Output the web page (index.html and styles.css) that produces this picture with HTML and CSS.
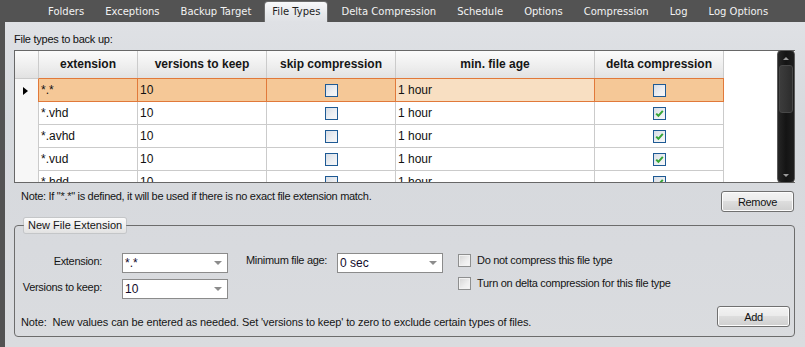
FILE: index.html
```html
<!DOCTYPE html>
<html>
<head>
<meta charset="utf-8">
<link rel="stylesheet" href="styles.css">
</head>
<body>
<div class="app">
  <nav class="tabs">
    <span class="tab">Folders</span>
    <span class="tab">Exceptions</span>
    <span class="tab">Backup Target</span>
    <span class="tab active">File Types</span>
    <span class="tab">Delta Compression</span>
    <span class="tab">Schedule</span>
    <span class="tab">Options</span>
    <span class="tab">Compression</span>
    <span class="tab">Log</span>
    <span class="tab">Log Options</span>
  </nav>
  <main class="panel">
    <div class="caption">File types to back up:</div>
    <div class="grid">
      <div class="grid-body">
        <div class="row head">
          <div class="c rh"></div>
          <div class="c ext">extension</div>
          <div class="c ver">versions to keep</div>
          <div class="c skip">skip compression</div>
          <div class="c age">min. file age</div>
          <div class="c delta">delta compression</div>
          <div class="c fill"></div>
        </div>
        <div class="row sel">
          <div class="c rh"><span class="pointer"></span></div>
          <div class="c ext">*.*</div>
          <div class="c ver">10</div>
          <div class="c skip"><span class="cb"></span></div>
          <div class="c age">1 hour</div>
          <div class="c delta"><span class="cb"></span></div>
          <div class="c fill"></div>
        </div>
        <div class="row">
          <div class="c rh"></div>
          <div class="c ext">*.vhd</div>
          <div class="c ver">10</div>
          <div class="c skip"><span class="cb"></span></div>
          <div class="c age">1 hour</div>
          <div class="c delta"><span class="cb"><svg viewBox="0 0 11 11" width="11" height="11"><path d="M2.2 5.6 L4.4 7.8 L8.8 2.8" fill="none" stroke="#36a536" stroke-width="2"/></svg></span></div>
          <div class="c fill"></div>
        </div>
        <div class="row">
          <div class="c rh"></div>
          <div class="c ext">*.avhd</div>
          <div class="c ver">10</div>
          <div class="c skip"><span class="cb"></span></div>
          <div class="c age">1 hour</div>
          <div class="c delta"><span class="cb"><svg viewBox="0 0 11 11" width="11" height="11"><path d="M2.2 5.6 L4.4 7.8 L8.8 2.8" fill="none" stroke="#36a536" stroke-width="2"/></svg></span></div>
          <div class="c fill"></div>
        </div>
        <div class="row">
          <div class="c rh"></div>
          <div class="c ext">*.vud</div>
          <div class="c ver">10</div>
          <div class="c skip"><span class="cb"></span></div>
          <div class="c age">1 hour</div>
          <div class="c delta"><span class="cb"><svg viewBox="0 0 11 11" width="11" height="11"><path d="M2.2 5.6 L4.4 7.8 L8.8 2.8" fill="none" stroke="#36a536" stroke-width="2"/></svg></span></div>
          <div class="c fill"></div>
        </div>
        <div class="row">
          <div class="c rh"></div>
          <div class="c ext">*.hdd</div>
          <div class="c ver">10</div>
          <div class="c skip"><span class="cb"></span></div>
          <div class="c age">1 hour</div>
          <div class="c delta"><span class="cb"><svg viewBox="0 0 11 11" width="11" height="11"><path d="M2.2 5.6 L4.4 7.8 L8.8 2.8" fill="none" stroke="#36a536" stroke-width="2"/></svg></span></div>
          <div class="c fill"></div>
        </div>
      </div>
      <div class="scrollbar">
        <span class="sb-btn"><span class="tri up"></span></span>
        <span class="thumb"></span>
        <span class="sb-space"></span>
        <span class="sb-btn"><span class="tri down"></span></span>
      </div>
    </div>
    <div class="note-row">
      <div class="note">Note: If "*.*" is defined, it will be used if there is no exact file extension match.</div>
      <button class="btn">Remove</button>
    </div>
    <fieldset class="group">
      <legend>New File Extension</legend>
      <div class="form">
        <label class="lbl">Extension:</label>
        <div class="combo"><span>*.*</span><span class="arrow"></span></div>
        <label class="lbl2">Minimum file age:</label>
        <div class="combo"><span>0 sec</span><span class="arrow"></span></div>
        <div class="checks">
          <div class="chk"><span class="box"></span>Do not compress this file type</div>
          <div class="chk"><span class="box"></span>Turn on delta compression for this file type</div>
        </div>
        <label class="lbl">Versions to keep:</label>
        <div class="combo"><span>10</span><span class="arrow"></span></div>
      </div>
      <div class="foot">
        <div class="note2">Note:&nbsp; New values can be entered as needed. Set 'versions to keep' to zero to exclude certain types of files.</div>
        <button class="btn">Add</button>
      </div>
    </fieldset>
  </main>
</div>
</body>
</html>
```

FILE: styles.css
```css
html, body {
  margin: 0;
  padding: 0;
  background: #535353;
}
.app {
  width: 805px;
  height: 347px;
  overflow: hidden;
  display: flex;
  flex-direction: column;
  background: #535353;
  font-family: "Liberation Sans", Arial, sans-serif;
  color: #111;
}
.tabs {
  height: 22px;
  flex: none;
  display: flex;
  align-items: flex-end;
  padding-left: 41px;
  box-sizing: border-box;
  font-family: "DejaVu Sans", sans-serif;
  font-size: 10px;
}
.tab {
  height: 20px;
  line-height: 20px;
  padding: 0 7px;
  margin-right: 7px;
  color: #f2f2f2;
  white-space: nowrap;
}
.tab.active {
  color: #1e1e1e;
  background: linear-gradient(#f8f9fa, #e6e8eb 60%, #dfe1e5);
  border-radius: 3px 3px 0 0;
  box-shadow: 0 0 0 1px rgba(255,255,255,0.15);
}
.panel {
  flex: 1;
  margin-left: 5px;
  padding: 10px 10px 0 9px;
  background: linear-gradient(#dfe1e5, #d6d9dd 30%, #d8dade 70%, #dadcdf);
}
.caption {
  font-size: 11px;
  letter-spacing: -0.25px;
  line-height: 14px;
  margin-bottom: 4px;
}
.grid {
  display: flex;
  height: 133px;
  box-sizing: border-box;
  border: 1px solid #676767;
  border-right: none;
  background: #fff;
}
.grid-body {
  flex: 1;
  overflow: hidden;
}
.row {
  display: flex;
  height: 23px;
  font-size: 12px;
}
.c {
  box-sizing: border-box;
  border-right: 1px solid #cbcbcb;
  border-bottom: 1px solid #cbcbcb;
  padding-left: 2px;
  line-height: 22px;
  white-space: nowrap;
  overflow: hidden;
}
.c.rh { width: 24px; border-bottom: none; background: #f7f7f7; padding: 0; }
.c.ext { width: 99px; }
.c.ver { width: 129px; }
.c.skip { width: 129px; }
.c.age { width: 199px; }
.c.delta { width: 129px; }
.c.fill { flex: 1; border: none; }
.c.skip, .c.delta {
  display: flex;
  align-items: center;
  justify-content: center;
  padding: 0;
}
.row.head { height: 28px; }
.row.head .c {
  background: linear-gradient(#fbfbfb, #ededed 60%, #e2e2e2);
  font-weight: bold;
  text-align: center;
  line-height: 27px;
  padding: 0;
  color: #161616;
}
.row.head .c.rh { border-bottom: 1px solid #cbcbcb; }
.row.head .c.fill { background: #fff; }
.row.sel {
  height: 24px;
  margin-top: -1px;
}
.row.sel .c {
  background: #f5c897;
  border-top: 1px solid #e1793a;
  border-bottom: 1px solid #e1793a;
  border-right-color: #e1793a;
}
.row.sel .c.age { background: #f8dfc2; }
.row.sel .c.rh {
  background: #f7f7f7;
  border-top-color: #cbcbcb;
  border-bottom: none;
  display: flex;
  align-items: center;
  justify-content: center;
}
.row.sel .c.fill { background: #fff; border: none; }
.pointer {
  width: 0;
  height: 0;
  border-top: 4px solid transparent;
  border-bottom: 4px solid transparent;
  border-left: 5px solid #000;
  margin-left: -3px;
}
.cb {
  width: 13px;
  height: 13px;
  box-sizing: border-box;
  border: 1px solid #1e5a94;
  background: linear-gradient(135deg, #d7dde5, #eef0f3 60%, #f7f7f8);
  display: flex;
  align-items: center;
  justify-content: center;
}
.scrollbar {
  width: 18px;
  flex: none;
  background: linear-gradient(90deg, #262626, #141414 50%, #1e1e1e);
  border-radius: 4px;
  margin: -1px 0 -1px 0;
  border: 1px solid #5a5a5a;
  box-sizing: border-box;
  display: flex;
  flex-direction: column;
  align-items: center;
}
.sb-btn {
  height: 14px;
  flex: none;
  display: flex;
  align-items: center;
  justify-content: center;
}
.tri {
  width: 0;
  height: 0;
  border-left: 3px solid transparent;
  border-right: 3px solid transparent;
}
.tri.up { border-bottom: 3px solid #9a9a9a; }
.tri.down { border-top: 3px solid #9a9a9a; }
.thumb {
  width: 14px;
  height: 48px;
  box-sizing: border-box;
  background: linear-gradient(90deg, #3c3c3c, #333 60%, #2c2c2c);
  border: 1px solid #474747;
  border-radius: 3px;
}
.sb-space { flex: 1; }
.note-row {
  display: flex;
  justify-content: space-between;
  align-items: flex-start;
  margin-top: 8px;
  padding-left: 7px;
  padding-right: 1px;
}
.note, .note2, .lbl, .lbl2, .chk {
  font-size: 11px;
  letter-spacing: -0.3px;
  line-height: 14px;
  color: #151515;
  white-space: nowrap;
}
.note { margin-top: -1px; line-height: 13px; }
.btn {
  width: 73px;
  height: 21px;
  margin: 0;
  padding: 0;
  box-sizing: border-box;
  border: 1px solid #707070;
  border-radius: 3px;
  background: linear-gradient(#f3f3f3, #ebebeb 45%, #dddddd 50%, #cfcfcf);
  box-shadow: inset 0 0 0 1px #fcfcfc;
  font-family: "Liberation Sans", Arial, sans-serif;
  font-size: 11px;
  letter-spacing: -0.3px;
  color: #111;
}
.group {
  margin: 6px 0 0 0;
  padding: 20px 4px 9px 6px;
  border: 1px solid #6c6c6c;
  border-radius: 4px;
}
.group legend {
  margin-left: 3px;
  padding: 0 4px;
  line-height: 15px;
  font-size: 11px;
  color: #151515;
  background: linear-gradient(#fbfbfb, #efefef 50%, #e2e2e2);
  border-radius: 2px;
  box-shadow: 0 0 0 1px rgba(160,160,160,0.35);
}
.form {
  display: grid;
  grid-template-columns: 101px 124px 91px 121px 1fr;
  grid-template-rows: 20px 20px;
  row-gap: 6px;
}
.lbl {
  text-align: right;
  padding-right: 20px;
  padding-top: 1px;
}
.lbl2 { padding-top: 0; }
.combo {
  width: 106px;
  height: 20px;
  box-sizing: border-box;
  border: 1px solid #8b8b8b;
  background: #fff;
  display: flex;
  align-items: center;
  justify-content: space-between;
  padding: 0 5px 0 2px;
  font-size: 12px;
  color: #120a2a;
}
.arrow {
  width: 0;
  height: 0;
  border-left: 4px solid transparent;
  border-right: 4px solid transparent;
  border-top: 4px solid #8c8c8c;
}
.checks {
  grid-column: 5;
  grid-row: 1 / span 2;
  display: flex;
  flex-direction: column;
  gap: 9px;
}
.chk {
  display: flex;
  align-items: center;
  gap: 6px;
  height: 14px;
}
.box {
  width: 13px;
  height: 13px;
  box-sizing: border-box;
  border: 1px solid #8e8f8f;
  background: linear-gradient(135deg, #d4d4d4, #eeeeee 60%, #f8f8f8);
  box-shadow: inset 0 0 0 1px #f2f2f2;
}
.foot {
  display: flex;
  justify-content: space-between;
  align-items: flex-end;
  margin-top: 7px;
}
.note2 { margin-bottom: -2px; letter-spacing: -0.12px; }
```
